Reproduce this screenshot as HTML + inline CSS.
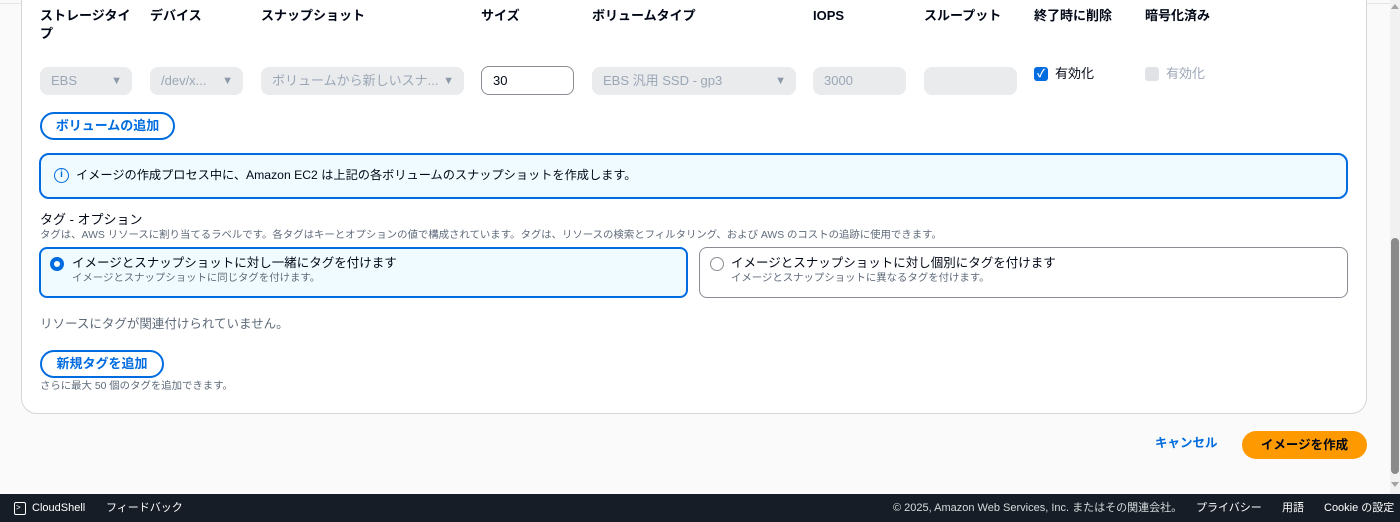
<!DOCTYPE html>
<html><head><meta charset="utf-8"><style>
*{box-sizing:border-box;margin:0;padding:0}
body{width:1400px;height:522px;overflow:hidden;background:#fafafa;font-family:"Liberation Sans","Noto Sans CJK JP",sans-serif;color:#000716;position:relative;font-size:13px}
.card{position:absolute;left:21px;top:-20px;width:1346px;height:434px;background:#fff;border:1px solid #d5d6d8;border-radius:16px}
.topline{position:absolute;left:0;top:3px;width:1390px;height:1px;background:#e4e5e7}
.a{position:absolute}
.h{font-weight:bold;font-size:13px;line-height:18px}
.sel{position:absolute;top:67px;height:28px;background:#e9ebed;border-radius:8px;color:#9ba7b6;font-size:13px;line-height:28px;padding-left:11px;white-space:nowrap}
.sel .ar{position:absolute;right:10px;top:0;font-size:11px;color:#8d99a8}
.btn{position:absolute;border:2px solid #006ce0;border-radius:20px;color:#006ce0;font-weight:bold;font-size:13px;text-align:center;background:#fff}
.sm{font-size:11px;color:#5f6b7a}
</style></head><body>
<div class="topline"></div>
<div class="card"></div>
<div class="a h" style="left:40px;top:7px;width:100px">ストレージタイ<br>プ</div>
<div class="a h" style="left:150px;top:7px">デバイス</div>
<div class="a h" style="left:261px;top:7px">スナップショット</div>
<div class="a h" style="left:481px;top:7px">サイズ</div>
<div class="a h" style="left:592px;top:7px">ボリュームタイプ</div>
<div class="a h" style="left:813px;top:7px">IOPS</div>
<div class="a h" style="left:924px;top:7px">スループット</div>
<div class="a h" style="left:1034px;top:7px">終了時に削除</div>
<div class="a h" style="left:1145px;top:7px">暗号化済み</div>

<div class="sel" style="left:40px;width:92px">EBS<span class="ar">▼</span></div>
<div class="sel" style="left:150px;width:93px">/dev/x...<span class="ar">▼</span></div>
<div class="sel" style="left:261px;width:203px">ボリュームから新しいスナ...<span class="ar">▼</span></div>
<div class="a" style="left:481px;top:66px;width:93px;height:29px;border:1px solid #8c8c94;border-radius:8px;line-height:27px;padding-left:11px">30</div>
<div class="sel" style="left:592px;width:204px">EBS 汎用 SSD - gp3<span class="ar">▼</span></div>
<div class="sel" style="left:813px;width:93px">3000</div>
<div class="sel" style="left:924px;width:93px;padding:0"></div>
<div class="a" style="left:1034px;top:67px;width:14px;height:14px;background:#006ce0;border-radius:3px;color:#fff;font-size:11px;line-height:14px;text-align:center;font-weight:bold">✓</div>
<div class="a" style="left:1055px;top:65px;line-height:18px">有効化</div>
<div class="a" style="left:1145px;top:67px;width:14px;height:14px;background:#e0e2e6;border-radius:3px"></div>
<div class="a" style="left:1166px;top:65px;line-height:18px;color:#9ba7b6">有効化</div>

<div class="btn" style="left:40px;top:112px;width:135px;height:28px;line-height:24px">ボリュームの追加</div>

<div class="a" style="left:39px;top:153px;width:1309px;height:46px;border:2px solid #006ce0;border-radius:10px;background:#f0fbff"></div>
<div class="a" style="left:54px;top:168px;width:15px;height:15px;border:1.5px solid #006ce0;border-radius:50%;color:#006ce0;font-size:10px;line-height:12px;text-align:center;font-weight:bold">i</div>
<div class="a" style="left:76px;top:166px;line-height:18px;font-size:12.2px">イメージの作成プロセス中に、Amazon EC2 は上記の各ボリュームのスナップショットを作成します。</div>

<div class="a" style="left:40px;top:211px;line-height:18px;font-size:13px">タグ - オプション</div>
<div class="a sm" style="left:40px;top:229px;line-height:14px;font-size:10.4px">タグは、AWS リソースに割り当てるラベルです。各タグはキーとオプションの値で構成されています。タグは、リソースの検索とフィルタリング、および AWS のコストの追跡に使用できます。</div>

<div class="a" style="left:39px;top:247px;width:649px;height:51px;border:2px solid #006ce0;border-radius:8px;background:#f0fbff"></div>
<div class="a" style="left:50px;top:257px;width:14px;height:14px;border:4px solid #006ce0;border-radius:50%;background:#fff"></div>
<div class="a" style="left:72px;top:254px;line-height:18px;font-size:12.5px">イメージとスナップショットに対し一緒にタグを付けます</div>
<div class="a sm" style="left:72px;top:272px;line-height:14px;font-size:10.4px">イメージとスナップショットに同じタグを付けます。</div>

<div class="a" style="left:699px;top:247px;width:649px;height:51px;border:1px solid #8c8c94;border-radius:8px;background:#fff"></div>
<div class="a" style="left:710px;top:257px;width:14px;height:14px;border:1.5px solid #8c8c94;border-radius:50%"></div>
<div class="a" style="left:731px;top:254px;line-height:18px;font-size:12.5px">イメージとスナップショットに対し個別にタグを付けます</div>
<div class="a sm" style="left:731px;top:272px;line-height:14px;font-size:10.4px">イメージとスナップショットに異なるタグを付けます。</div>

<div class="a" style="left:40px;top:315px;line-height:18px;color:#5f6b7a;font-size:12.5px">リソースにタグが関連付けられていません。</div>
<div class="btn" style="left:40px;top:350px;width:124px;height:28px;line-height:24px">新規タグを追加</div>
<div class="a sm" style="left:40px;top:380px;line-height:14px;font-size:10.4px">さらに最大 50 個のタグを追加できます。</div>

<div class="a" style="left:1155px;top:434px;line-height:18px;color:#006ce0;font-weight:bold;font-size:12.5px">キャンセル</div>
<div class="a" style="left:1242px;top:431px;width:125px;height:28px;background:#ff9900;border-radius:16px;line-height:28px;text-align:center;font-weight:bold;font-size:12.5px">イメージを作成</div>

<div class="a" style="left:1390px;top:0;width:10px;height:494px;background:#f1f1f1"></div>
<div class="a" style="left:1391px;top:4px;width:0;height:0;border-left:4px solid transparent;border-right:4px solid transparent;border-bottom:5px solid #a3a3a3"></div>
<div class="a" style="left:1391px;top:238px;width:8px;height:236px;background:#8a8a8a;border-radius:4px"></div>
<div class="a" style="left:1391px;top:482px;width:0;height:0;border-left:4px solid transparent;border-right:4px solid transparent;border-top:5px solid #a3a3a3"></div>

<div class="a" style="left:0;top:494px;width:1400px;height:28px;background:#161d26;color:#fff;font-size:11px;line-height:28px">
<div class="a" style="left:14px;top:8px;width:12px;height:13px;border:1.5px solid #fff;border-radius:2px;font-size:8px;line-height:9px;padding-left:1px">&gt;</div>
<span class="a" style="left:32px">CloudShell</span>
<span class="a" style="left:106px">フィードバック</span>
<span class="a" style="left:893px;color:#d5dbdb">© 2025, Amazon Web Services, Inc. またはその関連会社。</span>
<span class="a" style="left:1196px">プライバシー</span>
<span class="a" style="left:1282px">用語</span>
<span class="a" style="left:1324px">Cookie の設定</span>
</div>
</body></html>
